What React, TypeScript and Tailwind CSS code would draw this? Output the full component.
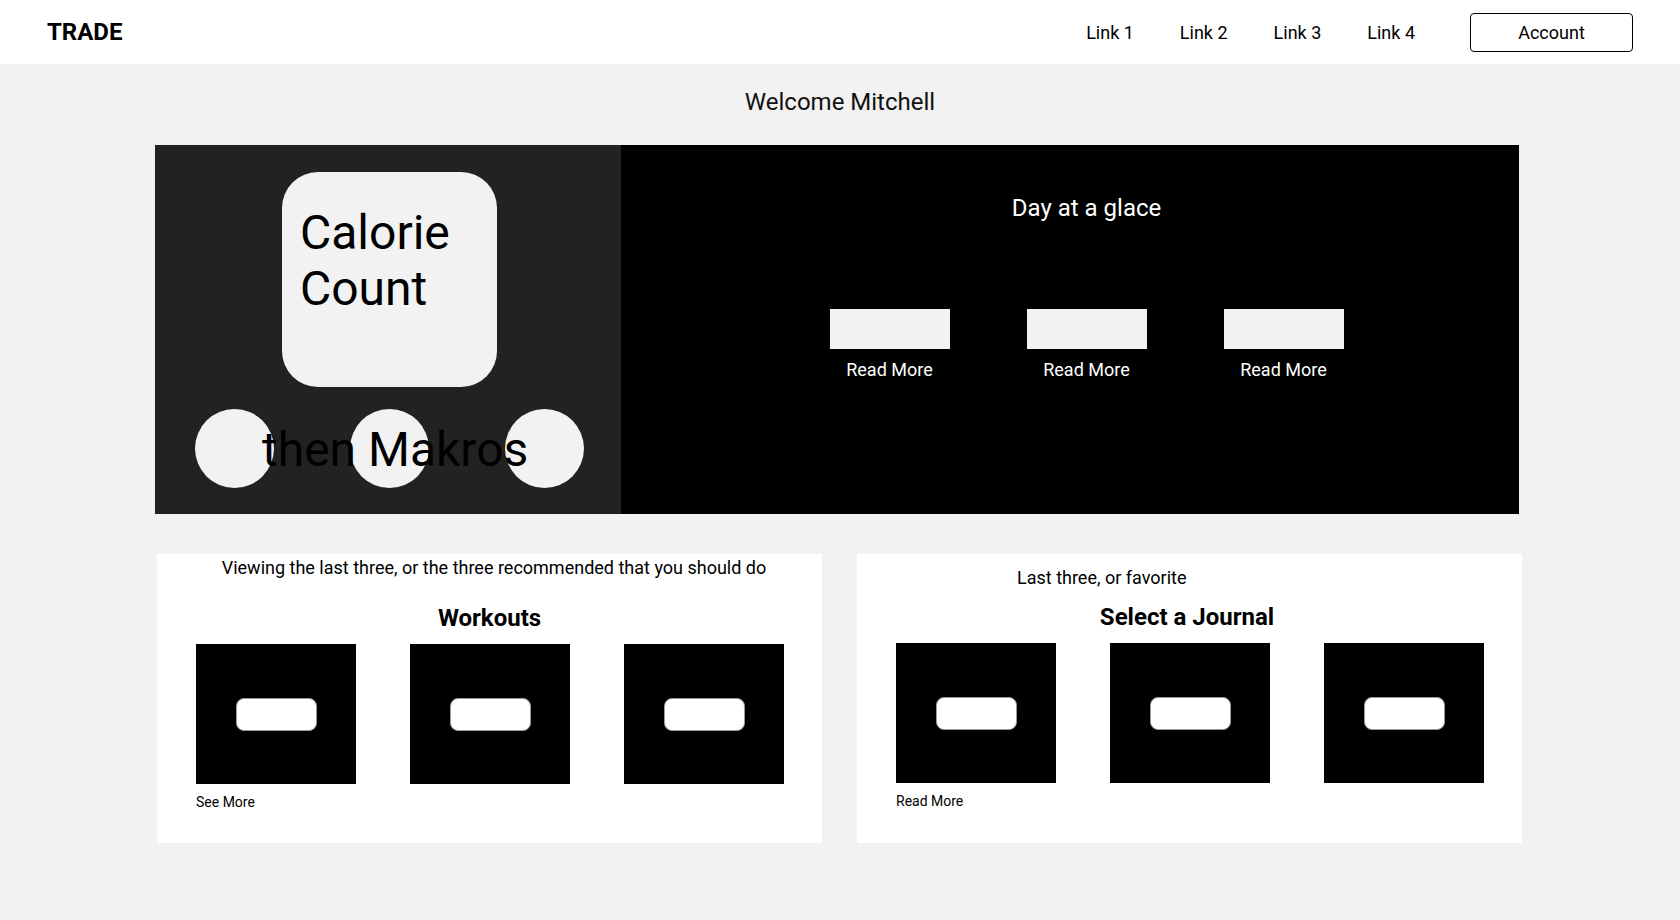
const NAV_LINKS = ['Link 1', 'Link 2', 'Link 3', 'Link 4'];

function Header() {
  return (
    <header className="flex h-16 items-center justify-between bg-white px-[47px]">
      <span className="text-[24px] font-bold leading-[28px] text-black">TRADE</span>
      <nav className="flex items-center">
        <div className="flex items-center gap-[46px] text-[18px] text-black">
          {NAV_LINKS.map((link) => (
            <a key={link} href="#" className="leading-[21px]">
              {link}
            </a>
          ))}
        </div>
        <button
          type="button"
          className="ml-[55px] h-[39px] w-[163px] rounded-[4px] border border-black bg-white text-[18px] text-black"
        >
          Account
        </button>
      </nav>
    </header>
  );
}

function Hero() {
  return (
    <section className="ml-[155px] mt-[29px] flex h-[369px] w-[1364px]">
      <div className="relative w-[466px] bg-[#222222] pt-[27px]">
        <div className="ml-[127px] h-[215px] w-[215px] rounded-[36px] bg-[#f2f2f2] pl-[18px] pt-[33px]">
          <p className="text-[48px] leading-[56px] text-black">
            Calorie
            <br />
            Count
          </p>
        </div>
        <div className="mt-[22px] flex gap-[76px] pl-[40px]">
          {[0, 1, 2].map((i) => (
            <div key={i} className="h-[79px] w-[79px] rounded-full bg-[#f2f2f2]" />
          ))}
        </div>
        {/* label sits over the circles */}
        <span className="absolute left-[107px] top-[277px] whitespace-nowrap text-[48px] leading-[56px] text-black">
          then Makros
        </span>
      </div>

      <div className="flex-1 bg-black pl-[33px] pt-[49px]">
        <h2 className="text-center text-[24px] leading-[28px] text-white">Day at a glace</h2>
        <div className="mt-[87px] flex justify-center gap-[77px]">
          {[0, 1, 2].map((i) => (
            <div key={i} className="flex w-[120px] flex-col items-center">
              <div className="h-[40px] w-[120px] bg-[#f2f2f2]" />
              <span className="mt-[10px] whitespace-nowrap text-[18px] leading-[21px] text-white">
                Read More
              </span>
            </div>
          ))}
        </div>
      </div>
    </section>
  );
}

interface TileCardProps {
  description: string;
  title: string;
  linkLabel: string;
  variant: 'workouts' | 'journal';
}

function TileCard({ description, title, linkLabel, variant }: TileCardProps) {
  const isWorkouts = variant === 'workouts';

  return (
    <div className={`h-[289px] w-[665px] bg-white ${isWorkouts ? 'pt-[3px]' : 'pt-[13px]'}`}>
      <p
        className={`text-[18px] leading-[21px] text-black ${
          isWorkouts ? 'pl-[9px] text-center' : 'pl-[160px] text-left'
        }`}
      >
        {description}
      </p>
      <h3
        className={`text-center text-[24px] font-bold leading-[28px] text-black ${
          isWorkouts ? 'mt-[26px]' : 'mt-[15px] pr-[5px]'
        }`}
      >
        {title}
      </h3>
      <div className="mt-[12px] flex gap-[54px] pl-[39px]">
        {[0, 1, 2].map((i) => (
          <div key={i} className="flex flex-col">
            <div className="flex h-[140px] w-[160px] items-center justify-center bg-black">
              <div className="h-[33px] w-[81px] rounded-[8px] border border-[#9a9a9a] bg-white" />
            </div>
            {i === 0 && (
              <span className="mt-[10px] text-[14px] leading-[16px] text-black">{linkLabel}</span>
            )}
          </div>
        ))}
      </div>
    </div>
  );
}

export default function App() {
  return (
    <div className="min-h-screen bg-[#f2f2f2] font-['Roboto',sans-serif]">
      <Header />
      <main className="pt-[24px]">
        <h1 className="text-center text-[24px] leading-[28px] text-[#111]">Welcome Mitchell</h1>
        <Hero />
        <div className="ml-[157px] mt-[40px] flex gap-[35px]">
          <TileCard
            variant="workouts"
            description="Viewing the last three, or the three recommended that you should do"
            title="Workouts"
            linkLabel="See More"
          />
          <TileCard
            variant="journal"
            description="Last three, or favorite"
            title="Select a Journal"
            linkLabel="Read More"
          />
        </div>
      </main>
    </div>
  );
}
